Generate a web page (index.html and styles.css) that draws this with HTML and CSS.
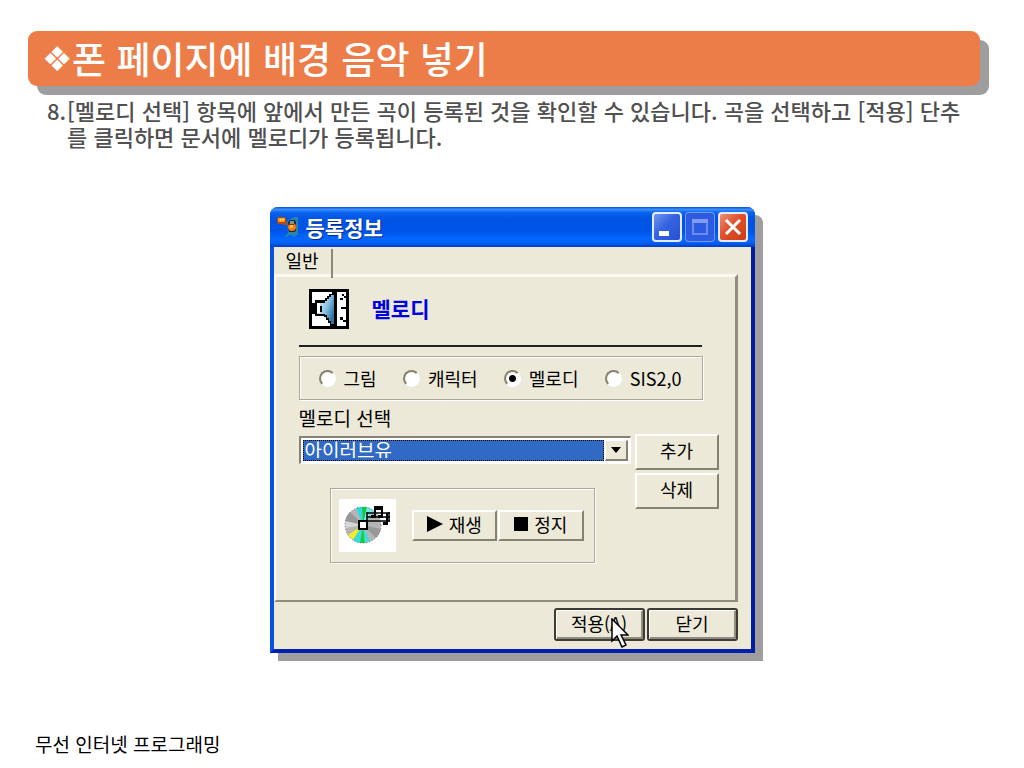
FILE: index.html
```html
<!DOCTYPE html>
<html lang="ko">

<head>
   <meta charset="UTF-8">
   <meta name="viewport" content="width=device-width, initial-scale=1.0">
   <title>폰 페이지에 배경 음악 넣기</title>
   <link rel="stylesheet" href="styles.css">
</head>

<body>
   <header class="slide-header">
      <span class="bullet">❖</span>
      <h1>폰 페이지에 배경 음악 넣기</h1>
   </header>
   <main>
      <div class="step">
         <span class="step-no">8.</span>
         <p>[멜로디 선택] 항목에 앞에서 만든 곡이 등록된 것을 확인할 수 있습니다. 곡을 선택하고 [적용] 단추를 클릭하면 문서에 멜로디가 등록됩니다.</p>
      </div>

      <section class="window">
         <div class="titlebar">
            <svg class="app-icon" viewBox="0 0 22 22">
               <path d="M10 5l7-4h4v18h-3l1 2h-3l-1-2h-3l-2 2H8l3-4z" fill="#2a86a8"/>
               <rect x="0" y="1" width="9" height="7" rx="2" fill="#b8480a"/>
               <path d="M6 6h4v3H6z" fill="#b8480a"/>
               <rect x="1" y="2" width="7" height="4" rx="1" fill="#ff9a20"/>
               <path d="M3 3h1v2H3zM5 3h2v1H5z" fill="#fff0a0"/>
               <path d="M11 6l2-2h5l1 2v9l-2 1h-5l-1-3z" fill="#15264f"/>
               <path d="M13 5h4v3h-4z" fill="#4aa6b8"/>
               <circle cx="15" cy="11" r="4" fill="#f57c12"/>
               <path d="M13 9h3v3h-3z" fill="#ffc04a"/>
               <path d="M12 8h5v1h-5z" fill="#8a2f08"/>
            </svg>
            <h2>등록정보</h2>
            <div class="win-buttons">
               <button type="button" class="win-btn" aria-label="최소화">
                  <svg viewBox="0 0 30 30"><rect x="7" y="19" width="10" height="5" fill="#fff"/></svg>
               </button>
               <button type="button" class="win-btn win-max" aria-label="최대화" disabled>
                  <svg viewBox="0 0 30 30"><path d="M8 8h14v14H8z" fill="none" stroke="#7f9cf0" stroke-width="1.5"/><path d="M7 7h16v4H7z" fill="#7f9cf0"/></svg>
               </button>
               <button type="button" class="win-btn win-close" aria-label="닫기">
                  <svg viewBox="0 0 30 30"><path d="M8 8l14 14M22 8L8 22" stroke="#fff" stroke-width="3"/></svg>
               </button>
            </div>
         </div>

         <div class="tabs">
            <button type="button" class="tab">일반</button>
         </div>

         <div class="panel">
            <div class="panel-title">
               <svg class="speaker" viewBox="0 0 40 40">
                  <defs>
                     <linearGradient id="cone" x1="0" y1="0" x2="1" y2="0.6">
                        <stop offset="0" stop-color="#e4f4fb"/>
                        <stop offset="0.6" stop-color="#8cc4e2"/>
                        <stop offset="1" stop-color="#2f74a0"/>
                     </linearGradient>
                  </defs>
                  <path d="M0 0h40v40H0z"/>
                  <path d="M3 3h20v34H3zM28 3h9v34h-9z" fill="#fff"/>
                  <path d="M2 14h4v-3h10V9h2V7h2V5h3v32h-2v-3h-2v-3h-2v-3h-2v-1H6v-2H2z"/>
                  <path d="M8 14h8v-2h2v-2h2V8h2V6h3v29h-3v-3h-2v-3h-2v-3h-2v-1H8z" fill="url(#cone)"/>
                  <path d="M8 14h3v10H8z" fill="#fff"/>
                  <path d="M11 17h2v6h-2z"/>
                  <path d="M33 5h2v2h-2zM35 7h2v2h-2zM31 9h3v2h-3zM32 18h5v2h-5zM31 28h3v3h-3zM34 31h3v2h-3z"/>
               </svg>
               <h3>멜로디</h3>
            </div>

            <fieldset class="kinds">
               <label><input type="radio" name="kind">그림</label>
               <label><input type="radio" name="kind">캐릭터</label>
               <label><input type="radio" name="kind" checked>멜로디</label>
               <label><input type="radio" name="kind">SIS2,0</label>
            </fieldset>

            <label class="select-label" for="melody">멜로디 선택</label>
            <div class="melody">
               <div class="melody-left">
                  <div class="combo">
                     <select id="melody">
                        <option>아이러브유</option>
                     </select>
                     <span class="combo-arrow"><svg viewBox="0 0 10 6"><path d="M0 0h10L5 6z"/></svg></span>
                  </div>
                  <div class="player">
                     <svg class="cd" viewBox="0 0 57 53">
                        <path d="M0 0h57v53H0z" fill="#fff"/>
                        <circle cx="24" cy="26" r="18" fill="#b5b5b5"/>
                        <path d="M24 26L6 22a18 18 0 0 1 5-9z" fill="#989898"/>
                        <path d="M24 26L6 29a18 18 0 0 1 0-7z" fill="#d6d6d6"/>
                        <path d="M24 26L17 9a18 18 0 0 1 6-1z" fill="#29dce2"/>
                        <path d="M24 26L23 8h5z" fill="#12c83c"/>
                        <path d="M24 26L28 8a18 18 0 0 1 7 4z" fill="#74e8e4"/>
                        <path d="M24 26L9 36l5 5z" fill="#f4ee24"/>
                        <path d="M24 26L14 41a18 18 0 0 0 7 3z" fill="#35dce2"/>
                        <path d="M24 26L21 44h5z" fill="#13cf39"/>
                        <path d="M24 26l2 18a18 18 0 0 0 5-2z" fill="#45dcda"/>
                        <path d="M24 26l13 13a18 18 0 0 0 5-9z" fill="#999"/>
                        <circle cx="24" cy="26" r="18" fill="none" stroke="#777" stroke-dasharray="1 2"/>
                        <path d="M20 22h8v8h-8z" fill="#fff" stroke="#000" stroke-width="2"/>
                        <path d="M28 14h23M28 18h23M28 22h23M28 13v10M50 13v10" stroke="#000" stroke-width="1.5"/>
                        <path d="M36 18V8h7v10M36 10h7M48 14v10" fill="none" stroke="#000" stroke-width="2"/>
                        <path d="M32 16h5v3h-5zM39 16h5v3h-5zM44 23h5v3h-5z"/>
                     </svg>
                     <div class="player-buttons">
                        <button type="button" class="btn"><svg class="play" viewBox="0 0 16 16"><path d="M0 0l16 8-16 8z"/></svg>재생</button>
                        <button type="button" class="btn"><svg class="stop" viewBox="0 0 14 14"><path d="M0 0h14v14H0z"/></svg>정지</button>
                     </div>
                  </div>
               </div>
               <div class="melody-buttons">
                  <button type="button" class="btn">추가</button>
                  <button type="button" class="btn">삭제</button>
               </div>
            </div>
         </div>

         <div class="actions">
            <button type="button" class="btn btn-dark">적용(A)</button>
            <button type="button" class="btn btn-dark">닫기</button>
            <svg class="cursor" viewBox="0 0 18 30"><path d="M1 1v22l5-5 5 11 4-2-5-10h7z" fill="#fff" stroke="#000" stroke-width="1.5"/></svg>
         </div>
      </section>
   </main>
   <footer class="slide-footer">무선 인터넷 프로그래밍</footer>
</body>
</html>
```
FILE: styles.css
```css
* {
   box-sizing: border-box;
}

body {
   display: flex;
   flex-direction: column;
   min-height: 100vh;
   margin: 0;
   background-color: #fff;
   color: #000;
   font-family: "Noto Sans CJK KR", sans-serif;
   font-size: 18px;
   line-height: 26px;
}

h1,
h2,
h3,
p {
   margin: 0;
}

button,
select {
   font: inherit;
   color: inherit;
}

.slide-header {
   display: flex;
   align-items: center;
   height: 55px;
   margin: 31px 44px 0 28px;
   padding-left: 14px;
   border-radius: 9px;
   background-color: #ed7d48;
   box-shadow: 9px 9px 0 #9f9d9d;
   color: #fff;
}

.bullet {
   width: 30px;
   font-family: "DejaVu Sans", sans-serif;
   font-size: 34px;
}

.slide-header h1 {
   font-size: 37px;
   font-weight: 500;
   line-height: 55px;
}

.step {
   display: flex;
   margin: 11px 60px 0 47px;
   color: #505050;
   font-size: 22px;
   font-weight: 500;
}

.step-no {
   flex: none;
   width: 20px;
}

/* dialog */
.window {
   width: 100%;
   max-width: 485px;
   margin: 58px auto 40px;
   border: 4px solid #0831d9;
   border-left-color: #0a50e0;
   border-right-color: #001ea0;
   border-bottom-color: #0020ae;
   border-top: 0;
   border-radius: 8px 8px 0 0;
   background-color: #ece9d8;
   box-shadow: 8px 8px 0 #9f9d9d;
}

.titlebar {
   display: flex;
   align-items: center;
   height: 40px;
   margin: 0 -4px;
   padding: 0 7px;
   border-radius: 8px 8px 0 0;
   background: linear-gradient(#0a50d0 0, #3a90ff 6%, #0a62ee 14%, #0054e3 30%, #0055e8 60%, #0468ff 80%, #0560f5 90%, #003dc0 100%);
   color: #fff;
}

.app-icon {
   width: 22px;
   height: 22px;
}

.titlebar h2 {
   flex: 1;
   padding-left: 7px;
   font-size: 21px;
   text-shadow: 1px 1px 0 #0a2a80;
}

.win-buttons {
   display: flex;
   gap: 3px;
}

.win-btn {
   width: 30px;
   height: 30px;
   padding: 0;
   border: 0;
   border-radius: 4px;
   background: linear-gradient(135deg, #7f9ff2, #3563e0 45%, #2450d2);
   box-shadow: inset 0 0 0 2px #e4ebfb;
}

.win-btn svg {
   display: block;
}

.win-max {
   background: #2c5be2;
   box-shadow: inset 0 0 0 1px #7597ee;
}

.win-close {
   background: linear-gradient(135deg, #f09a80, #e0512c 45%, #c8380f);
}

.tabs {
   height: 27px;
}

.tab {
   width: 59px;
   height: 29px;
   padding: 0 0 6px 12px;
   border: 0;
   border-right: 2px solid #8c8979;
   background: none;
   text-align: left;
   line-height: 23px;
}

.panel {
   margin-right: 13px;
   padding: 12px 16px 37px 23px;
   border: 2px solid #fbfaf2;
   border-top-width: 3px;
   border-right: 3px solid #8f8d7e;
   border-bottom-color: #8f8d7e;
}

.panel-title {
   display: flex;
   align-items: center;
   gap: 23px;
   margin-right: 17px;
   padding: 0 0 16px 10px;
   border-bottom: 2px solid #222;
}

.speaker {
   width: 40px;
   height: 40px;
}

.panel-title h3 {
   padding-bottom: 3px;
   color: #0000e0;
   font-size: 21px;
}

.kinds {
   display: flex;
   align-items: center;
   justify-content: space-between;
   height: 44px;
   margin: 9px 16px 0 0;
   padding: 0 20px 0 19px;
   border: 1px solid #aca899;
   box-shadow: 1px 1px 0 #fff, inset 1px 1px 0 #fff;
}

.kinds label {
   display: flex;
   align-items: center;
   gap: 8px;
}

.kinds input {
   appearance: none;
   width: 17px;
   height: 17px;
   margin: 0;
   border: 2px solid #fff;
   border-top-color: #85826f;
   border-left-color: #85826f;
   border-radius: 50%;
   background-color: #fff;
}

.kinds input:checked {
   background-image: radial-gradient(circle, #000 3px, #fff 4px);
}

.select-label {
   display: block;
   margin: 5px 0 3px;
   font-size: 19px;
}

.melody {
   display: flex;
   gap: 4px;
}

.melody-left {
   flex: 1;
   padding-top: 2px;
}

.combo {
   display: flex;
   height: 28px;
   padding: 2px;
   border: 1px solid #fff;
   border-top: 2px solid #858371;
   border-left: 2px solid #858371;
   background-color: #fff;
}

.combo select {
   appearance: none;
   flex: 1;
   height: 21px;
   padding: 0 1px 2px;
   border: 1px dotted #000;
   border-radius: 0;
   outline: 0;
   background-color: #316ac5;
   color: #fff;
   font-size: 19px;
   line-height: 17px;
}

.combo-arrow {
   display: flex;
   align-items: center;
   justify-content: center;
   width: 23px;
   margin-left: 1px;
   border: 1px solid #fff;
   border-right: 2px solid #85826f;
   border-bottom: 2px solid #85826f;
   background-color: #ece9d8;
}

.combo-arrow svg {
   width: 10px;
   height: 6px;
}

.player {
   display: flex;
   align-items: center;
   gap: 16px;
   height: 75px;
   margin: 24px 36px 0 31px;
   padding: 0 10px 0 8px;
   border: 1px solid #aca899;
   box-shadow: 1px 1px 0 #fff, inset 1px 1px 0 #fff;
}

.cd {
   flex: none;
   width: 57px;
   height: 53px;
}

.player-buttons {
   display: flex;
   flex: 1;
   gap: 1px;
}

.btn {
   display: flex;
   flex: 1;
   align-items: center;
   justify-content: center;
   gap: 6px;
   height: 36px;
   padding: 0 0 4px;
   border: 2px solid #fff;
   border-right-color: #85826f;
   border-bottom-color: #85826f;
   background-color: #ece9d8;
   line-height: 24px;
}

.player-buttons .btn {
   height: 31px;
}

.play {
   width: 16px;
   height: 16px;
}

.stop {
   width: 14px;
   height: 14px;
}

.melody-buttons {
   display: flex;
   flex-direction: column;
   gap: 3px;
   width: 84px;
}

.melody-buttons .btn {
   flex: none;
}

.actions {
   display: flex;
   position: relative;
   justify-content: flex-end;
   gap: 2px;
   padding: 6px 13px 8px 0;
}

.actions .btn {
   flex: none;
   width: 91px;
   height: 33px;
}

.actions .btn-dark {
   border-color: #3c3b35;
   border-radius: 3px;
   box-shadow: inset 1px 1px 0 #fff, inset -2px -2px 0 #8f8d7e;
}

.cursor {
   position: absolute;
   top: 16px;
   right: 122px;
   width: 18px;
   height: 30px;
}

.slide-footer {
   margin-top: auto;
   padding: 0 35px 11px;
   font-size: 19px;
}
```
